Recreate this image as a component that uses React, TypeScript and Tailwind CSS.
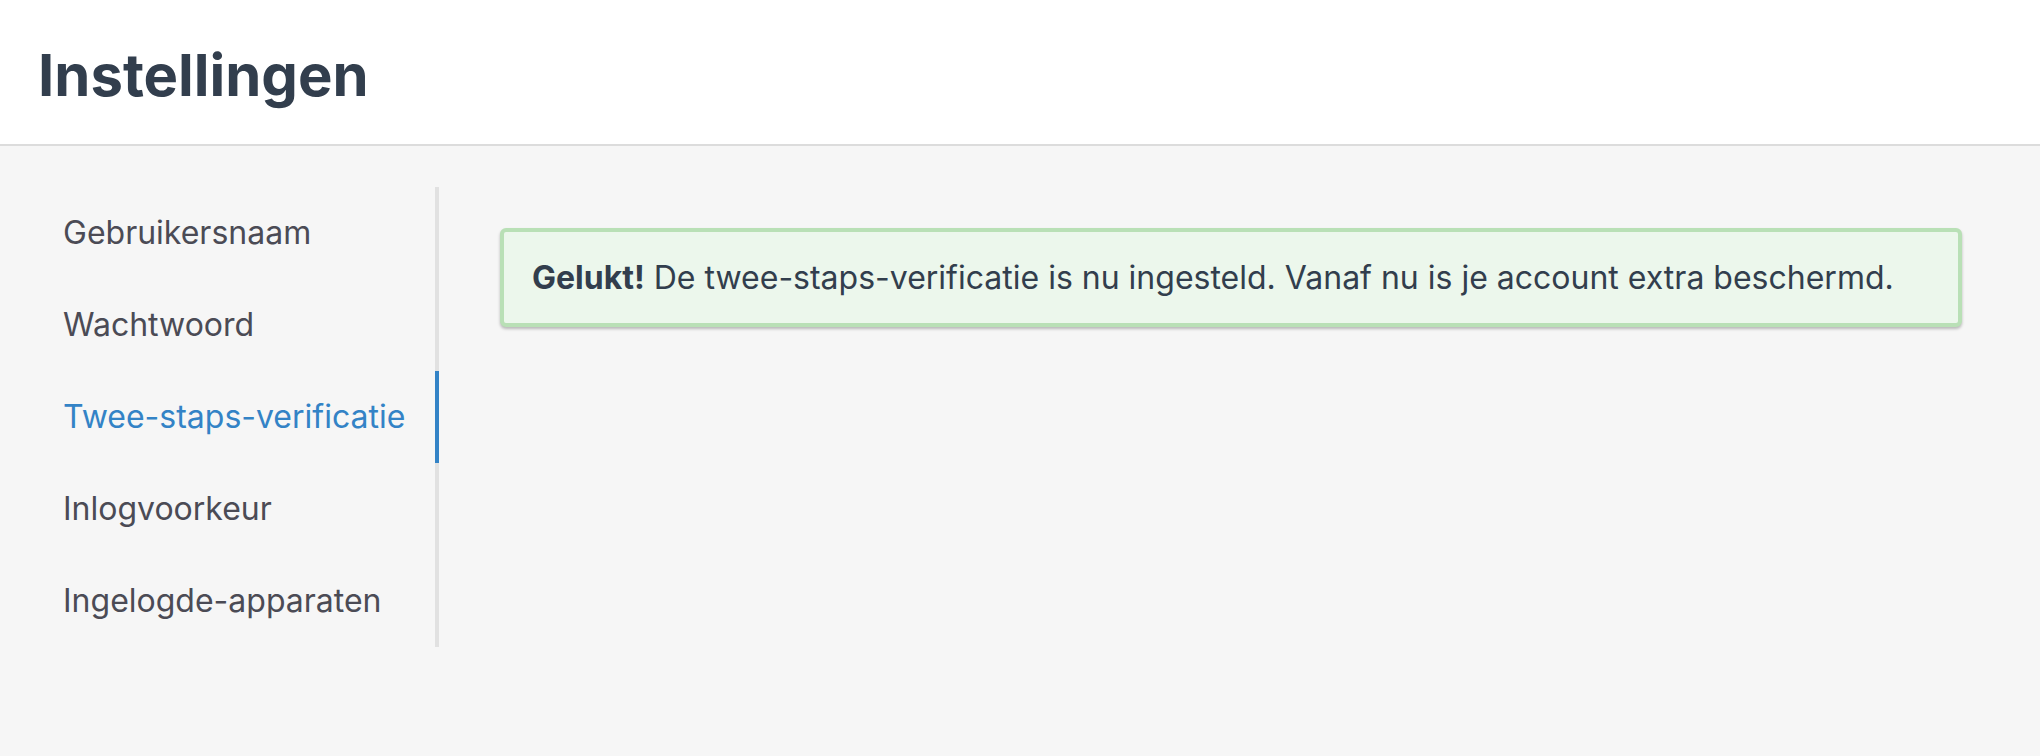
export default function App() {
  const items = [
    { label: 'Gebruikersnaam', active: false },
    { label: 'Wachtwoord', active: false },
    { label: 'Twee-staps-verificatie', active: true },
    { label: 'Inlogvoorkeur', active: false },
    { label: 'Ingelogde-apparaten', active: false },
  ]

  return (
    <div className="min-h-screen bg-[#f6f6f6] font-['Inter','Noto_Sans',sans-serif]">
      {/* Header */}
      <header className="h-[146px] bg-white border-b-2 border-[#dcdcdc] flex items-center pt-[6px] px-[38px]">
        <h1 className="text-[58px] leading-none font-bold text-[#323e4d]">Instellingen</h1>
      </header>

      <div className="flex pt-[41px]">
        {/* Sidebar */}
        <nav className="w-[439px] flex flex-col shrink-0">
          {items.map(item => (
            <a
              key={item.label}
              href="#"
              className={
                item.active
                  ? 'h-[92px] flex items-center pl-[63px] border-r-4 border-[#3383c6] text-[32px] text-[#3383c6]'
                  : 'h-[92px] flex items-center pl-[63px] border-r-4 border-[#e1e1e1] text-[32px] text-[#4b4b55]'
              }
            >
              {item.label}
            </a>
          ))}
        </nav>

        {/* Content */}
        <main className="flex-1 pl-[61px] pr-[78px] pt-[41px]">
          <div className="h-[99px] flex items-center px-[28px] bg-[#ecf7ec] border-4 border-[#b9e0b6] rounded-md shadow-[0_2px_3px_rgba(0,0,0,0.25)] text-[32px] text-[#323e4d]">
            <p>
              <strong className="font-bold">Gelukt!</strong> De twee-staps-verificatie is nu ingesteld. Vanaf nu is je
              account extra beschermd.
            </p>
          </div>
        </main>
      </div>
    </div>
  )
}
